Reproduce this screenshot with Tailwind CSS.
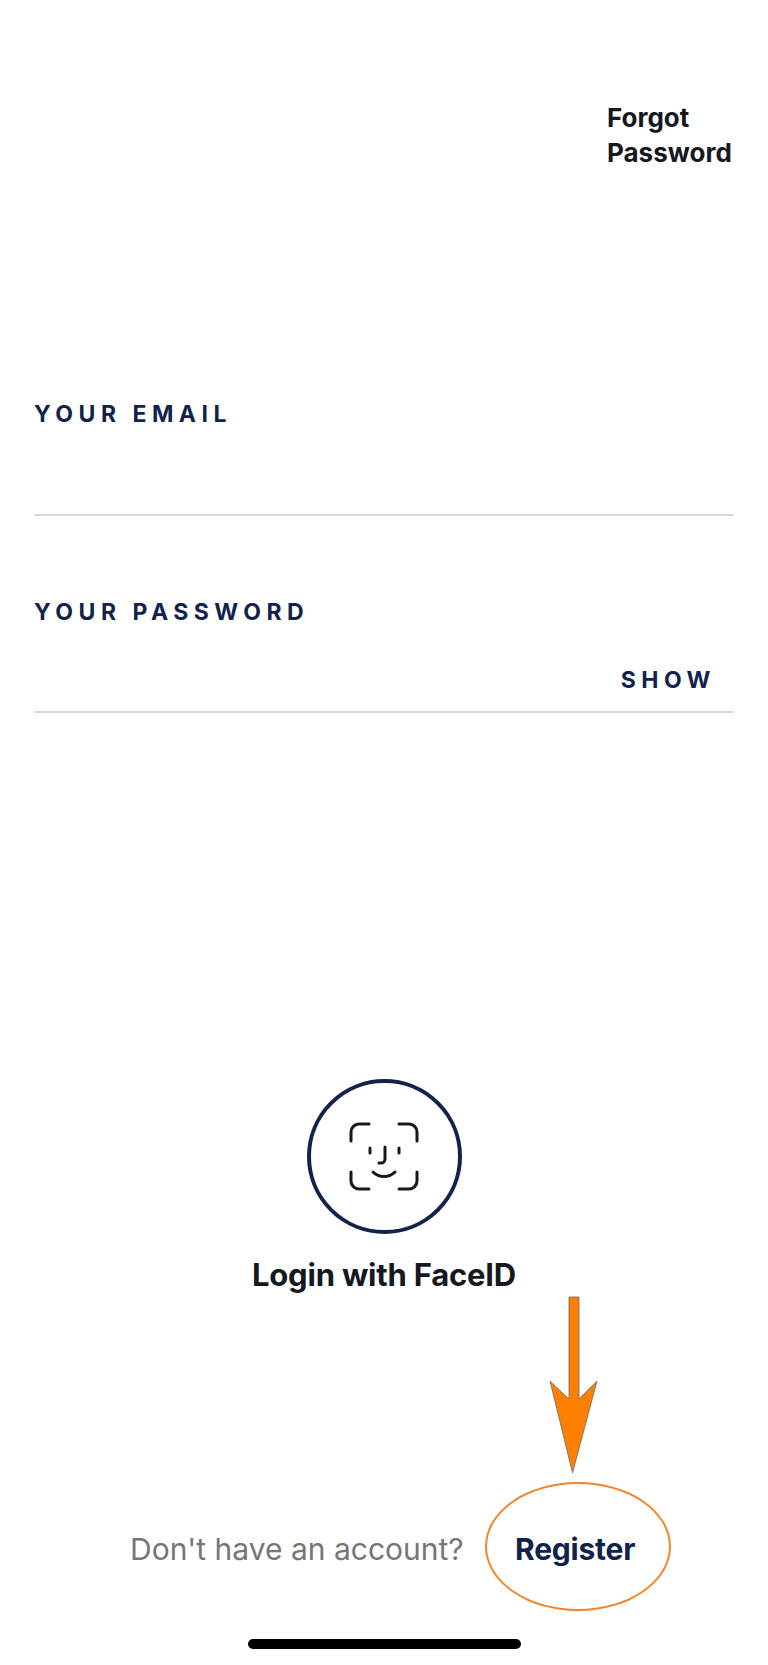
<!DOCTYPE html>
<html lang="en">
<head>
  <meta charset="utf-8" />
  <title>Login</title>
  <script src="https://cdn.jsdelivr.net/npm/@tailwindcss/browser@4"></script>
</head>
<body class="bg-white font-['Inter',sans-serif]">
  <div class="relative w-[768px] h-[1665px] overflow-hidden flex flex-col">
    <!-- Forgot link -->
    <div class="flex justify-start pl-[607px] pt-[100px]">
      <a class="text-[26px] leading-[35px] font-bold text-[#15181f]">Forgot<br />Password</a>
    </div>

    <!-- Form -->
    <div class="px-[34px] pt-[232px]">
      <div class="h-[114px] border-b-2 border-[#d9d9d9]">
        <label class="block text-[23px] leading-[25px] font-bold tracking-[5.5px] text-[#12234b]">YOUR EMAIL</label>
      </div>
      <div class="mt-[84px] h-[113px] border-b-2 border-[#d9d9d9] flex flex-col justify-between">
        <label class="block text-[23px] leading-[25px] font-bold tracking-[5.5px] text-[#12234b]">YOUR PASSWORD</label>
        <div class="flex justify-end pr-[18px] pb-[18px]">
          <button class="text-[23px] leading-[25px] font-bold tracking-[5.5px] text-[#12234b]">SHOW</button>
        </div>
      </div>
    </div>

    <!-- FaceID -->
    <div class="flex flex-col items-center pt-[366px]">
      <div class="w-[155px] h-[155px] rounded-full border-4 border-[#12234b] flex items-center justify-center">
        <svg width="70" height="70" viewBox="0 0 70 70" fill="none" stroke="#15181f" stroke-width="3" stroke-linecap="round" stroke-linejoin="round">
          <path d="M20 2H10a8 8 0 0 0-8 8v9" />
          <path d="M50 2h10a8 8 0 0 1 8 8v9" />
          <path d="M2 50v9a8 8 0 0 0 8 8h10" />
          <path d="M68 50v9a8 8 0 0 1-8 8H50" />
          <path d="M21 26v5" />
          <path d="M50 26v5" />
          <path d="M36 25v12a4 4 0 0 1-4 4h-2" />
          <path d="M24 50c6 6 16 6 22 0" />
        </svg>
      </div>
      <p class="mt-[21px] text-[31px] leading-[40px] font-bold tracking-[-0.2px] text-[#15181f]">Login with FaceID</p>
    </div>

    <!-- Register row -->
    <div class="flex pl-[130px] pt-[234px] items-baseline">
      <span class="w-[385px] text-[30px] leading-[40px] text-[#767676]">Don't have an account?</span>
      <a class="text-[30px] leading-[40px] font-bold tracking-[-0.2px] text-[#12234b]">Register</a>
    </div>

    <!-- Annotation over the page -->
    <svg class="absolute left-[540px] top-[1290px]" width="70" height="190" viewBox="540 1290 70 190">
      <path d="M569 1297H579V1399L597 1381L572.500 1473L550 1381L569 1399Z" fill="#ff8000" stroke="#6b6b6b" stroke-width="0.8" />
    </svg>
    <div class="absolute left-[485px] top-[1482px] w-[186px] h-[129px] rounded-[50%] border-2 border-[#f5832a]"></div>

    <!-- Home indicator -->
    <div class="absolute left-[248px] top-[1639px] w-[273px] h-[10px] rounded-full bg-black"></div>
  </div>
</body>
</html>
